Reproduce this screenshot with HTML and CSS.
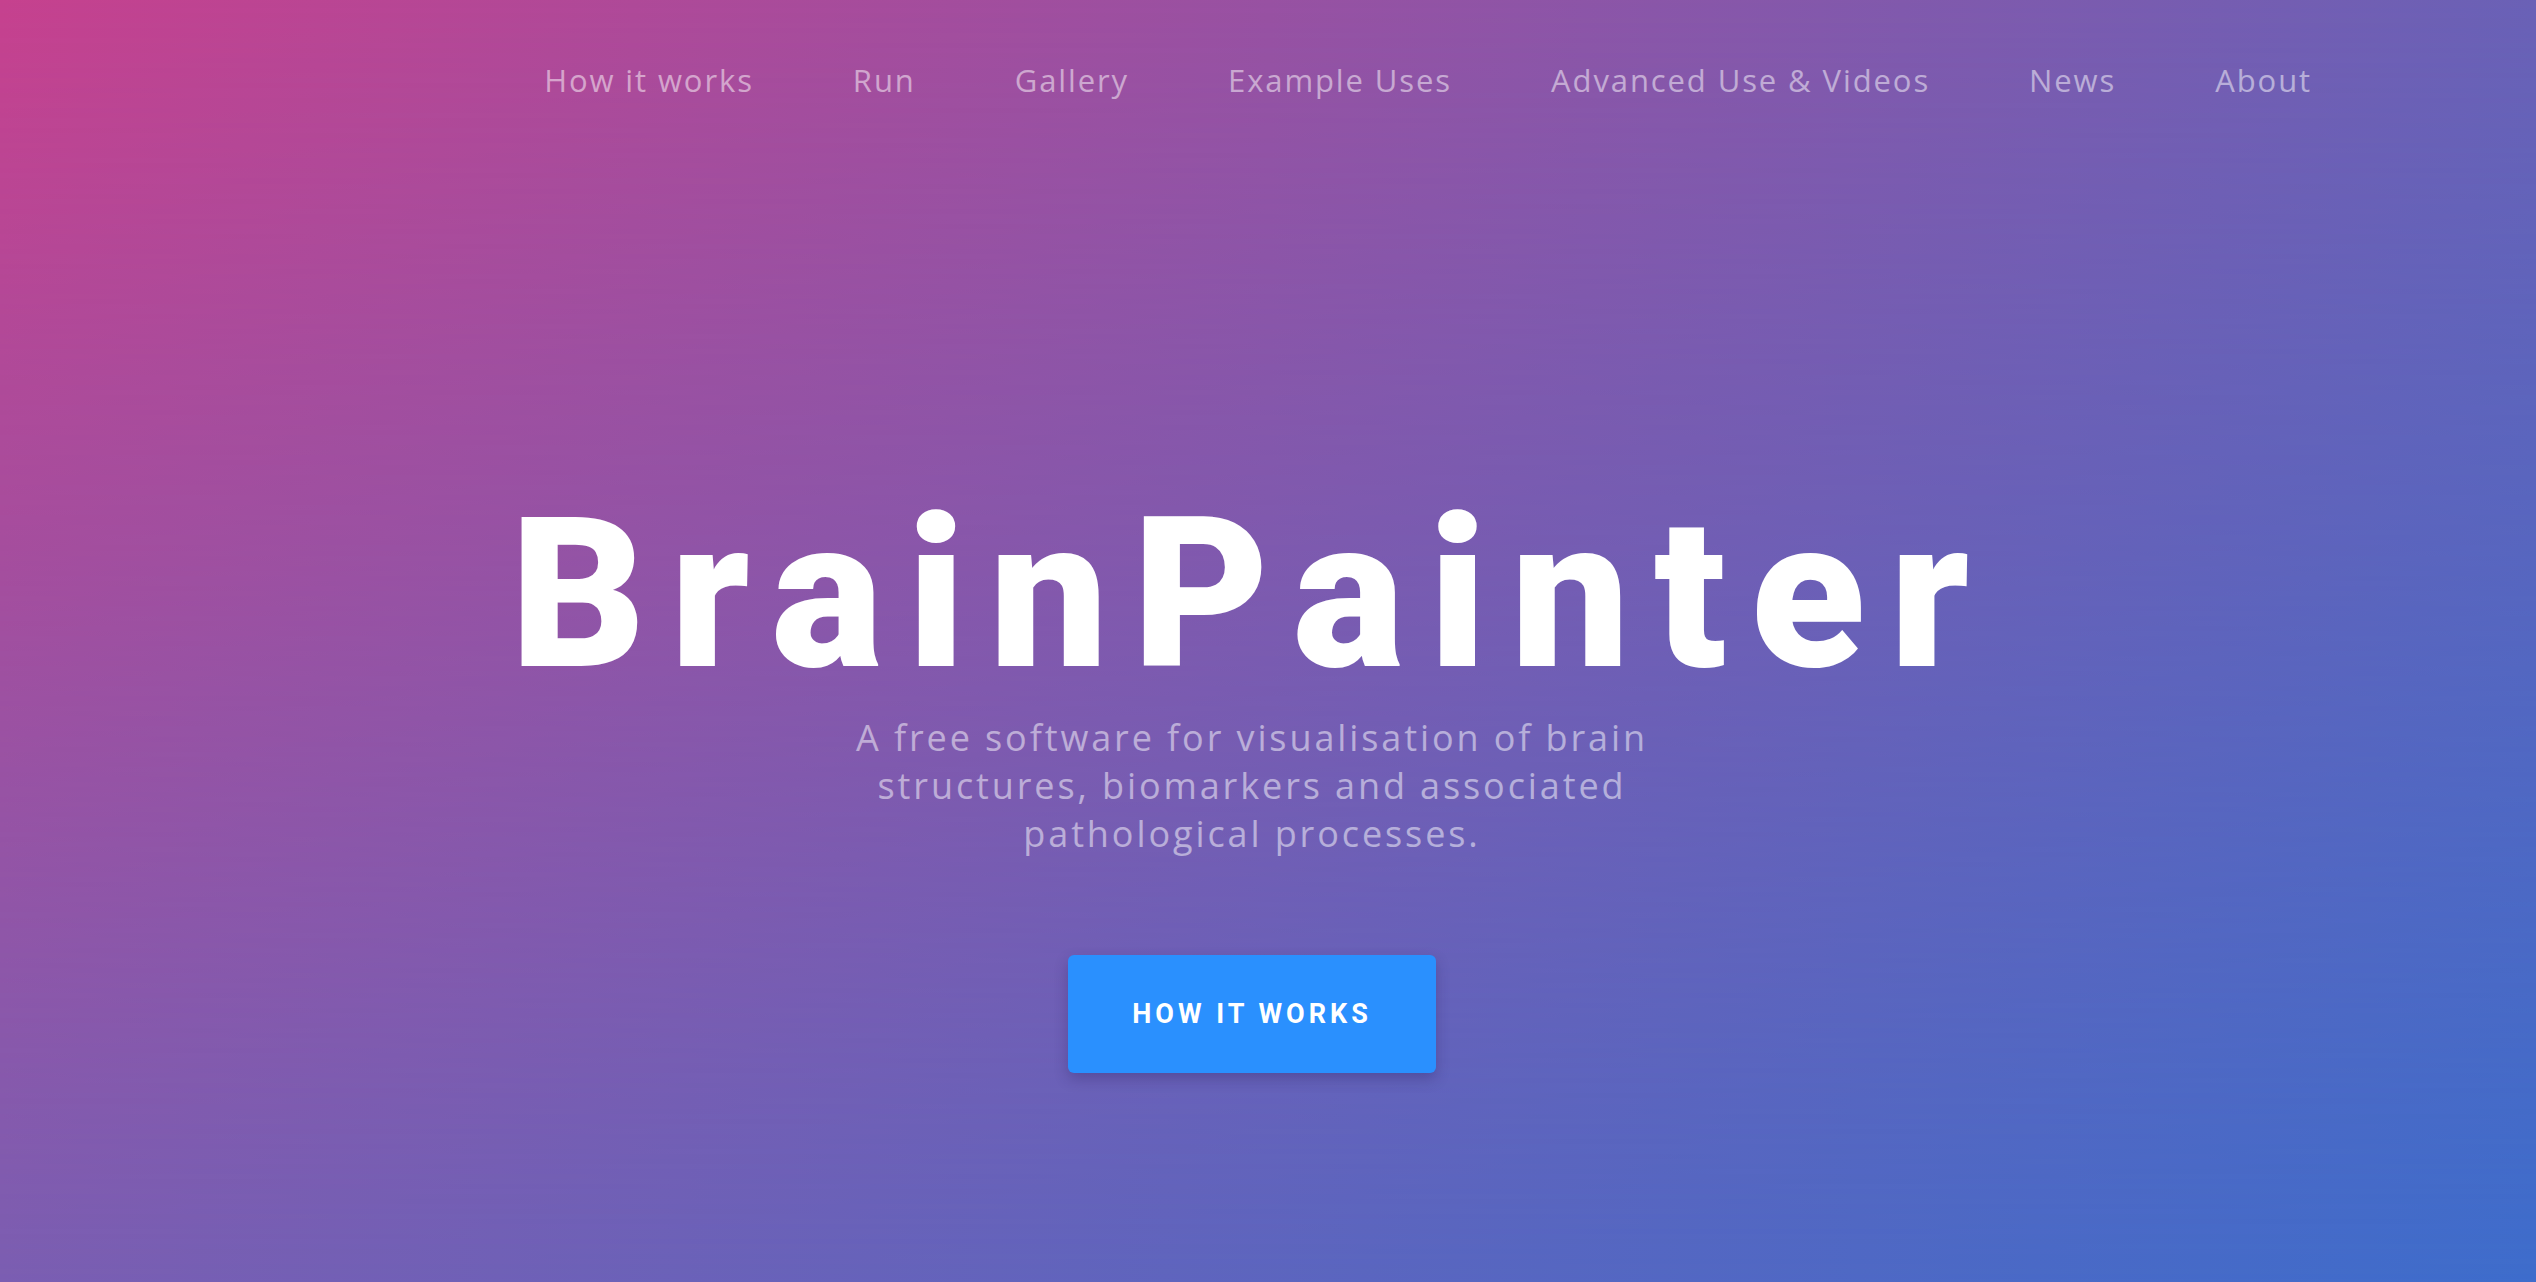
FILE: index.html
```
<!DOCTYPE html>
<html lang="en">
<head>
<meta charset="utf-8">
<title>BrainPainter</title>
<link rel="stylesheet" href="styles.css">
</head>
<body>
<div class="hero">
  <nav class="nav">
    <a class="nav-link" href="#">How it works</a>
    <a class="nav-link" href="#">Run</a>
    <a class="nav-link" href="#">Gallery</a>
    <a class="nav-link" href="#">Example Uses</a>
    <a class="nav-link" href="#">Advanced Use &amp; Videos</a>
    <a class="nav-link" href="#">News</a>
    <a class="nav-link" href="#">About</a>
  </nav>
  <main class="intro">
    <h1 class="title">BrainPainter</h1>
    <p class="subtitle">A free software for visualisation of brain<br>structures, biomarkers and associated<br>pathological processes.</p>
    <a class="btn" href="#">HOW IT WORKS</a>
  </main>
</div>
</body>
</html>
```
FILE: styles.css
```
html, body {
  margin: 0;
  padding: 0;
}
body {
  font-family: "Open Sans", "Lato", sans-serif;
  overflow: hidden;
}
.hero {
  position: relative;
  height: 1282px;
  background: linear-gradient(to right, #7b5eb2, #3e6dcc);
}
.hero::before {
  content: "";
  position: absolute;
  inset: 0;
  background: linear-gradient(to right, #c6418e, #6a61b6);
  -webkit-mask-image: linear-gradient(to bottom, #000, transparent);
  mask-image: linear-gradient(to bottom, #000, transparent);
}
.nav {
  position: relative;
  display: flex;
  justify-content: flex-end;
  gap: 99px;
  padding: 60px 224px 0 0;
  height: 40px;
}
.nav-link {
  color: rgba(255, 255, 255, 0.5);
  text-decoration: none;
  font-size: 31px;
  line-height: 40px;
  letter-spacing: 1.9px;
}
.intro {
  position: relative;
  display: flex;
  flex-direction: column;
  align-items: center;
  padding: 389px 32px 0 0;
}
.title {
  margin: 0;
  font-family: "Roboto", sans-serif;
  font-weight: 900;
  font-size: 210px;
  line-height: 210px;
  letter-spacing: 24.5px;
  color: #fff;
}
.subtitle {
  margin: 15px 0 0;
  font-size: 36px;
  line-height: 48px;
  letter-spacing: 2.9px;
  text-align: center;
  color: rgba(255, 255, 255, 0.5);
}
.btn {
  margin-top: 97px;
  width: 368px;
  height: 118px;
  display: flex;
  align-items: center;
  justify-content: center;
  box-sizing: border-box;
  background: #2a90fe;
  border-radius: 6px;
  box-shadow: 0 6px 14px rgba(40, 30, 90, 0.3);
  color: #fff;
  text-decoration: none;
  font-family: "Roboto", sans-serif;
  font-weight: 700;
  font-size: 27px;
  letter-spacing: 4px;
}
```
